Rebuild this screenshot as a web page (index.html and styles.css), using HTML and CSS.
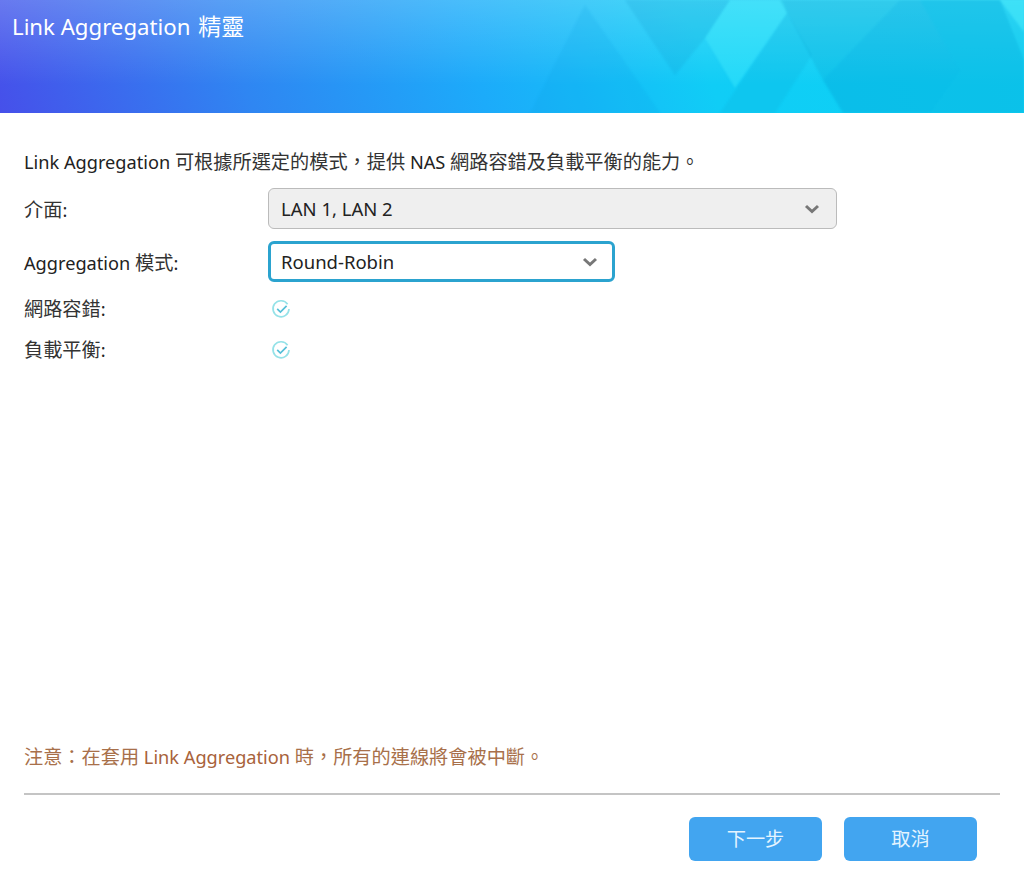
FILE: index.html
```html
<!DOCTYPE html>
<html lang="zh-Hant">
<head>
    <meta charset="UTF-8">
    <title>Link Aggregation 精靈</title>
    <link rel="stylesheet" href="styles.css">
</head>
<body>
<div class="wizard">
    <div class="banner">
        <svg class="banner_art" width="1024" height="113" viewBox="0 0 1024 113">
            <polygon points="585,5 530,113 660,113" fill="#0a9fe0" opacity="0.14"/>
            <polygon points="625,0 730,0 705,38 675,75" fill="#0a8fc8" opacity="0.16"/>
            <polygon points="730,0 783,0 787,13 735,88 705,38" fill="#4ff2ff" opacity="0.32"/>
            <polygon points="787,13 780,0 900,0 823,80" fill="#0a9ac8" opacity="0.22"/>
            <polygon points="787,13 812,55 775,113 720,113" fill="#08a8d8" opacity="0.2"/>
            <polygon points="900,0 823,80 843,113 1024,113 1024,60 1000,0" fill="#049fd2" opacity="0.34"/>
            <polygon points="920,0 1000,0 1024,32 1024,113 930,113 960,70" fill="#10c4ea" opacity="0.35"/>
            <polygon points="1000,0 1024,0 1024,32" fill="#40e4f8" opacity="0.6"/>
        </svg>
        <div class="banner_title">Link Aggregation <span class="zh">精靈</span></div>
    </div>

    <div class="content">
        <p class="intro">Link Aggregation <span class="zh">可根據所選定的模式，提供</span> NAS <span class="zh">網路容錯及負載平衡的能力。</span></p>
        <div class="row row_select">
            <div class="label"><span class="zh">介面</span>:</div>
            <div class="select select_disabled">
                <span>LAN 1, LAN 2</span>
                <svg class="arrow" width="16" height="10" viewBox="0 0 16 10"><path d="M2 2l6 5.5L14 2" fill="none" stroke="#777" stroke-width="3"/></svg>
            </div>
        </div>
        <div class="row row_select">
            <div class="label">Aggregation <span class="zh">模式</span>:</div>
            <div class="select select_focus">
                <span>Round-Robin</span>
                <svg class="arrow" width="16" height="10" viewBox="0 0 16 10"><path d="M2 2l6 5.5L14 2" fill="none" stroke="#777" stroke-width="3"/></svg>
            </div>
        </div>
        <div class="row row_check">
            <div class="label"><span class="zh">網路容錯</span>:</div>
            <svg class="check" width="20" height="20" viewBox="0 0 20 20"><path d="M16.6 5.2A8 8 0 1 0 18 10" fill="none" stroke="#95e2e8" stroke-width="1.7"/><path d="M6.2 9.8l3.2 3.2 6.2-6.2" fill="none" stroke="#55bfd8" stroke-width="1.7"/></svg>
        </div>
        <div class="row row_check">
            <div class="label"><span class="zh">負載平衡</span>:</div>
            <svg class="check" width="20" height="20" viewBox="0 0 20 20"><path d="M16.6 5.2A8 8 0 1 0 18 10" fill="none" stroke="#95e2e8" stroke-width="1.7"/><path d="M6.2 9.8l3.2 3.2 6.2-6.2" fill="none" stroke="#55bfd8" stroke-width="1.7"/></svg>
        </div>
    </div>

    <div class="footer">
        <p class="notice"><span class="zh">注意：在套用</span> Link Aggregation <span class="zh">時，所有的連線將會被中斷。</span></p>
        <div class="buttons">
            <div class="btn zh">下一步</div>
            <div class="btn zh">取消</div>
        </div>
    </div>
</div>
</body>
</html>
```

FILE: styles.css
```css
*{
    padding: 0;
    margin: 0;
    box-sizing: border-box;
}
html, body{
    height: 100%;
}
body{
    background-color: #fff;
    color: #222;
    font-family: "Noto Sans", "Noto Sans CJK TC", sans-serif;
    font-size: 18.2px;
    overflow: hidden;
}
.zh{
    font-size: 19.2px;
    color: #333;
}
.wizard{
    height: 876px;
    display: flex;
    flex-direction: column;
}
.banner{
    position: relative;
    flex: none;
    height: 113px;
    padding: 11px 12px 0;
    background:
        linear-gradient(180deg, rgba(255,255,255,0.2) 0%, rgba(255,255,255,0) 75%),
        linear-gradient(72deg, #4650ea 0%, #2f86f2 24%, #1cabfa 46%, #10cdf6 68%, #0cd2f4 100%);
    overflow: hidden;
}
.banner_art{
    position: absolute;
    left: 0;
    top: 0;
    filter: blur(1px);
}
.banner_title{
    position: relative;
    color: #fff;
    font-size: 22.2px;
    line-height: 31px;
}
.banner_title .zh{
    color: #fff;
    font-size: 23px;
    margin-left: 2px;
}
.content{
    flex: 1;
    padding: 36px 24px 0;
}
.intro{
    line-height: 26px;
    margin-bottom: 13px;
}
.row{
    display: flex;
    align-items: center;
}
.row_select{
    height: 41px;
    margin-bottom: 12px;
}
.row_select + .row_check{
    margin-top: 14px;
}
.row_check{
    height: 24px;
    margin-bottom: 17px;
}
.label{
    flex: none;
    width: 244px;
}
.select{
    height: 41px;
    display: flex;
    align-items: center;
    justify-content: space-between;
    padding: 0 16px 0 12px;
    font-size: 18.5px;
    border-radius: 6px;
    border: 1px solid #bbb;
}
.select_disabled{
    width: 569px;
    background-color: #efefef;
}
.select_focus{
    width: 347px;
    border: 3px solid #2ba3cf;
    padding: 0 14px 0 10px;
    background-color: #fff;
}
.check{
    margin-left: 3px;
    margin-top: 2px;
}
.footer{
    flex: none;
    padding: 0 24px;
}
.notice{
    color: #a8623a;
    line-height: 26px;
    padding-bottom: 23px;
    border-bottom: 2px solid #c4c4c4;
}
.notice .zh{
    color: #a8704a;
}
.buttons{
    display: flex;
    justify-content: flex-end;
    gap: 22px;
    padding: 22px 23px 15px 0;
}
.btn{
    width: 133px;
    height: 44px;
    line-height: 44px;
    text-align: center;
    background-color: #42a5f0;
    border-radius: 6px;
}
.btn.zh{
    color: #e4f4ff;
}
```
